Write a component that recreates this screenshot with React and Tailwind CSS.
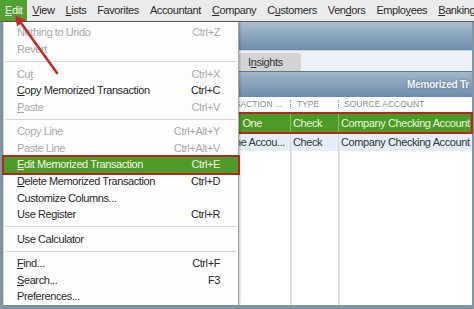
const menuBar = ["&Edit", "&View", "&Lists", "Favorites", "Accountant", "&Company", "C&ustomers", "Ven&dors", "Emplo&yees", "&Banking"];

const editItems = [
  { label: "Nothing to Undo", key: "Ctrl+Z", off: true },
  { label: "Revert", off: true },
  { sep: true },
  { label: "Cu&t", key: "Ctrl+X", off: true },
  { label: "&Copy Memorized Transaction", key: "Ctrl+C" },
  { label: "&Paste", key: "Ctrl+V", off: true },
  { sep: true },
  { label: "Copy Line", key: "Ctrl+Alt+Y", off: true },
  { label: "Paste Line", key: "Ctrl+Alt+V", off: true },
  { label: "&Edit Memorized Transaction", key: "Ctrl+E", active: true },
  { label: "&Delete Memorized Transaction", key: "Ctrl+D" },
  { label: "Customize Columns..." },
  { label: "Use Register", key: "Ctrl+R" },
  { sep: true },
  { label: "Use Calculator" },
  { sep: true },
  { label: "&Find...", key: "Ctrl+F" },
  { label: "&Search...", key: "F3" },
  { label: "Preferences..." },
];

// "&" marks the mnemonic letter
function Label({ text }) {
  const i = text.indexOf("&");
  if (i < 0) return <>{text}</>;
  return (
    <>
      {text.slice(0, i)}
      <span className="underline underline-offset-[1px]">{text[i + 1]}</span>
      {text.slice(i + 2)}
    </>
  );
}

function MenuItem({ item }) {
  if (item.sep) {
    return (
      <div className="h-[7.9px] flex items-center px-[2px]">
        <div className="h-px w-full bg-[#d6d6d6]" />
      </div>
    );
  }
  const color = item.active ? "text-[#eef8e4]" : item.off ? "text-[#a9a9a9]" : "text-[#2a2a2a]";
  return (
    <div
      className={`h-[16.6px] flex items-center justify-between pl-[13px] pr-[18px] ${color} ${
        item.active ? "relative z-10 bg-[#4f9a28] ring-2 ring-[#b3291f]" : ""
      }`}
    >
      <span><Label text={item.label} /></span>
      {item.key && <span>{item.key}</span>}
    </div>
  );
}

export default function App() {
  return (
    <div className="relative w-[474px] h-[309px] overflow-hidden bg-[#8095a6] font-['Liberation_Sans',Arial,sans-serif] text-[11px] tracking-[-0.4px] leading-none">
      {/* menu bar */}
      <div className="flex h-[22px] bg-[#ebebeb] border-b border-[#5d5d5d] text-[#2b2b2b]">
        {menuBar.map((m, i) => (
          <div
            key={m}
            className={`flex items-center px-[5px] ${i === 0 ? "bg-[#55a032] text-[#f0f8e8]" : i > 1 ? "ml-[1px]" : ""}`}
          >
            <Label text={m} />
          </div>
        ))}
      </div>

      {/* window behind the menu */}
      <div className="ml-[3px] mr-[2px] h-[283px] flex flex-col bg-white">
        <div className="h-[28px] bg-gradient-to-b from-[#a9bdd0] via-[#8aa5be] to-[#6d8dab]" />
        <div className="h-[21px] bg-[#edf0f6] border-t border-[#c9d2dd] flex items-end">
          <div className="ml-[227px] w-[71px] h-[18px] pl-[18px] flex items-center bg-[#d4d4d4] rounded-tr-[3px] text-[#333]">
            I<span className="underline">n</span>sights
          </div>
        </div>
        <div className="h-[26px] border-t border-[#5b7896] bg-gradient-to-b from-[#a2b7ca] via-[#86a0ba] to-[#6d8caa] flex items-center pl-[404px] whitespace-nowrap overflow-hidden">
          <span className="text-[10px] font-bold tracking-[-0.2px] text-[#f2f6fa] [text-shadow:0_0_2px_#4f6d8a]">
            Memorized Tr
          </span>
        </div>
        <div className="h-[15px] grid grid-cols-[287px_48px_1fr] items-center text-[8.5px] tracking-[0px] text-[#8c8c8c]">
          <div className="text-right pr-[8px] whitespace-nowrap overflow-hidden">SACTION ...</div>
          <div className="h-[9px] flex items-center pl-[6px] border-l border-dotted border-[#9a9a9a]">TYPE</div>
          <div className="h-[9px] flex items-center pl-[5px] border-l border-dotted border-[#9a9a9a]">SOURCE ACCOUNT</div>
        </div>
        <div className="h-[22px] -mr-[1px] border-y-2 border-r-2 border-[#b3291f] grid grid-cols-[287px_48px_1fr] bg-[#4d9a27] text-[#e9f6dd]">
          <div className="flex items-center justify-end pr-[28px]">One</div>
          <div className="flex items-center pl-[2px] border-l border-[#86bd62]">Check</div>
          <div className="flex items-center pl-[2px] border-l border-[#86bd62] whitespace-nowrap overflow-hidden">Company Checking Account</div>
        </div>
        <div className="h-[17px] grid grid-cols-[287px_48px_1fr] bg-[#e5edf8] text-[#333]">
          <div className="flex items-center justify-end pr-[5px] whitespace-nowrap">ne Accou...</div>
          <div className="flex items-center pl-[2px] border-l border-[#cfd6df]">Check</div>
          <div className="flex items-center pl-[2px] border-l border-[#cfd6df] whitespace-nowrap overflow-hidden">Company Checking Account</div>
        </div>
        <div className="flex-1 grid grid-cols-[287px_48px_1fr]">
          <div />
          <div className="border-l-2 border-[#dedede]" />
          <div className="border-l-2 border-[#dedede]" />
        </div>
      </div>

      {/* Edit dropdown */}
      <div className="absolute left-[3px] top-[22px] w-[236px] h-[283px] bg-[#fdfdfd] border-l border-[#d4d4d4] border-r border-r-[#a8a8a8] shadow-[1px_0_2px_rgba(0,0,0,0.25)] pt-[2.7px] z-10">
        {editItems.map((it, i) => (
          <MenuItem key={i} item={it} />
        ))}
      </div>

      {/* red pointer arrow */}
      <svg className="absolute left-0 top-0 z-20 pointer-events-none" width="70" height="80" viewBox="0 0 70 80">
        <line x1="57" y1="73" x2="21" y2="23" stroke="#c52b2b" strokeWidth="2.6" strokeLinecap="round" />
        <polygon points="15,15 25.5,20 17,26.5" fill="#c52b2b" />
      </svg>
    </div>
  );
}
